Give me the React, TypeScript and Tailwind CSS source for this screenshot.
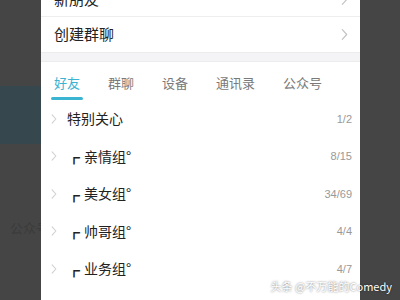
import React from 'react';

const font = { fontFamily: '"Noto Sans CJK SC", "Noto Sans", sans-serif' };

const Chevron = ({ className = '' }: { className?: string }) => (
  <svg viewBox="0 0 8 14" className={className} fill="none" stroke="currentColor" strokeWidth="1.4" strokeLinecap="round" strokeLinejoin="round">
    <path d="M1.5 1.5 L6.5 7 L1.5 12.5" />
  </svg>
);

const groups = [
  { name: '特别关心', count: '1/2', sub: false },
  { name: '亲情组°', count: '8/15', sub: true },
  { name: '美女组°', count: '34/69', sub: true },
  { name: '帅哥组°', count: '4/4', sub: true },
  { name: '业务组°', count: '4/7', sub: true },
  { name: '', count: '', sub: false },
];

const tabs = ['好友', '群聊', '设备', '通讯录', '公众号'];

export default function App() {
  return (
    <div className="relative flex h-[300px] w-[400px] overflow-hidden bg-[#454545]" style={font}>
      {/* left dimmed strip */}
      <div className="flex w-[41px] shrink-0 flex-col">
        <div className="h-[86px] shrink-0" />
        <div className="h-[58px] shrink-0 bg-[#37474e]" />
        <div className="mt-[77px] whitespace-nowrap pl-[10px] text-[13px] leading-none text-[#3b3b3b]">公众号</div>
      </div>

      {/* main panel */}
      <div className="flex w-[319px] shrink-0 flex-col bg-white">
        <div className="-mt-[18px] flex h-[35px] shrink-0 items-center justify-between border-b border-[#eeeeee] pl-[13px] pr-[12px]">
          <span className="text-[15px] text-[#222]">新朋友</span>
          <Chevron className="h-[13px] w-[7px] text-[#c4c4c4]" />
        </div>
        <div className="flex h-[35px] shrink-0 items-center justify-between pl-[13px] pr-[12px]">
          <span className="text-[15px] text-[#222]">创建群聊</span>
          <Chevron className="h-[13px] w-[7px] text-[#c4c4c4]" />
        </div>
        <div className="h-[10px] shrink-0 border-y border-[#ececec] bg-[#f4f4f6]" />

        <div className="flex h-[38px] shrink-0 items-stretch gap-[28px] pl-[13px] text-[13px]">
          {tabs.map((t, i) => (
            <div key={t} className="flex flex-col items-center justify-end whitespace-nowrap">
              <span className={`mb-[8px] leading-none ${i === 0 ? 'text-[#3bb4d2]' : 'text-[#7a7a7a]'}`}>{t}</span>
              <div className={`-mx-[3px] h-[3px] self-stretch rounded-full ${i === 0 ? 'bg-[#3bb4d2]' : 'bg-transparent'}`} />
            </div>
          ))}
        </div>

        <div className="flex flex-col">
          {groups.map((g, i) => (
            <div key={i} className="flex h-[37.5px] shrink-0 items-center pl-[10px] pr-[8px]">
              <Chevron className="mr-[10px] h-[12px] w-[6px] text-[#cfcfcf]" />
              {g.sub && (
                <span className="ml-[1px] mr-[4px] mt-[4px] text-[12px] font-bold leading-none text-[#222]">┏</span>
              )}
              <span className="flex-1 text-[14px] text-[#222]">{g.name}</span>
              <span className="text-[11px] text-[#999]" style={{ fontFamily: '"Liberation Sans", sans-serif' }}>{g.count}</span>
            </div>
          ))}
        </div>
      </div>

      <div className="flex-1 bg-[#454545]" />

      <div
        className="absolute bottom-[6px] right-[8px] whitespace-nowrap text-[11px] text-white"
        style={{ textShadow: '0 0 2px rgba(0,0,0,0.6)' }}
      >
        头条 @不万能的Comedy
      </div>
    </div>
  );
}
